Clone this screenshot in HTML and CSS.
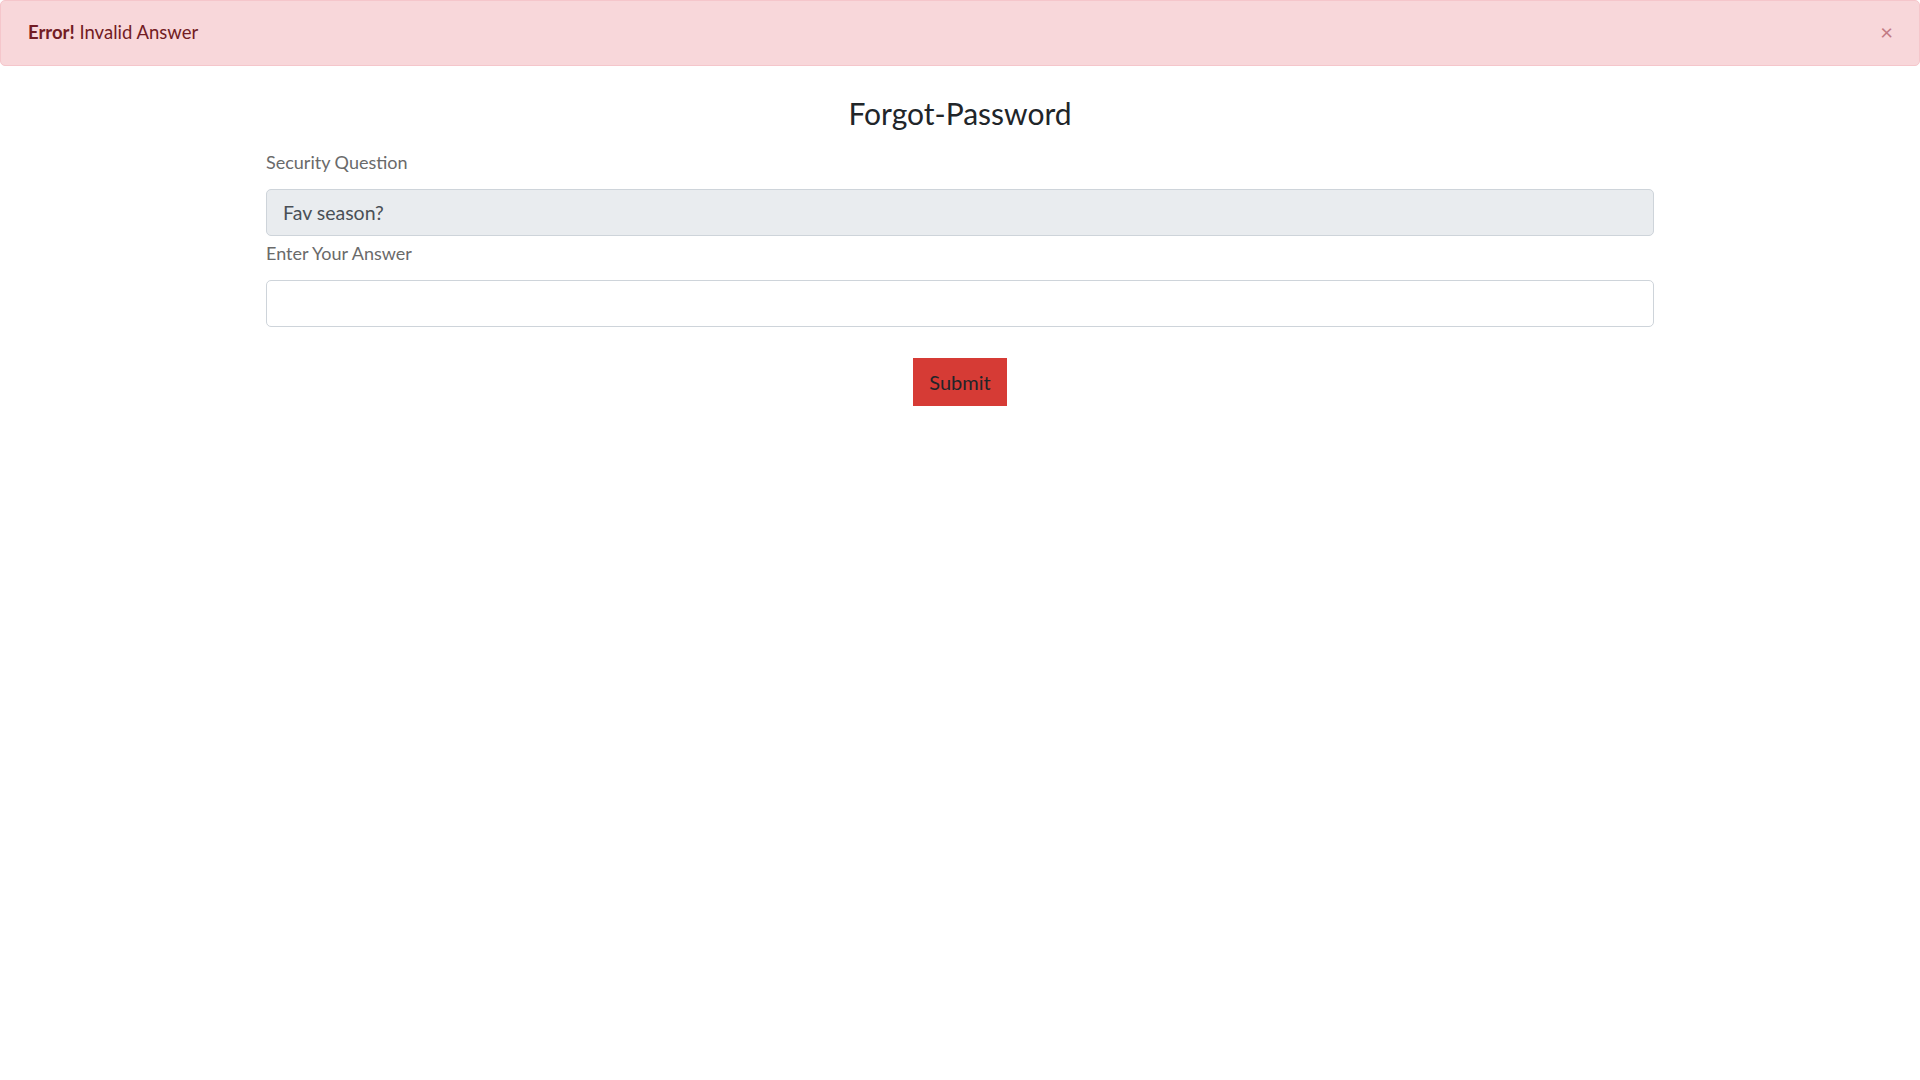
FILE: index.html
```html
<!DOCTYPE html>
<html lang="en">
<head>
<meta charset="utf-8">
<title>Forgot-Password</title>
<link rel="stylesheet" href="styles.css">
</head>
<body>
<div class="alert">
  <span class="alert-text"><strong>Error!</strong> Invalid Answer</span>
  <button class="alert-close" type="button" aria-label="Close">&times;</button>
</div>
<main class="container">
  <h2 class="title">Forgot-Password</h2>
  <form class="form">
    <label class="label">Security Question</label>
    <input class="input input-disabled" type="text" value="Fav season?" disabled>
    <label class="label">Enter Your Answer</label>
    <input class="input" type="text">
    <div class="actions">
      <button class="btn-submit" type="button">Submit</button>
    </div>
  </form>
</main>
</body>
</html>
```
FILE: styles.css
```css
* { box-sizing: border-box; }
html, body { margin: 0; padding: 0; background: #fff; }
body {
  font-family: Lato, "Open Sans", sans-serif;
  color: #212529;
}
.alert {
  display: flex;
  align-items: center;
  justify-content: space-between;
  height: 66px;
  padding: 0 26px 2px 27px;
  background: #f8d7da;
  border: 1px solid #f5c6cb;
  border-radius: 5px;
  color: #721c24;
  font-size: 18.5px;
}
.alert strong { font-weight: 700; }
.alert-close {
  background: none;
  border: 0;
  padding: 0;
  font-family: Lato, sans-serif;
  font-size: 22px;
  line-height: 1;
  color: #b5636e;
  opacity: 0.8;
  cursor: pointer;
}
.container {
  width: 1388px;
  margin: 0 auto;
}
.title {
  margin: 29px 0 0;
  text-align: center;
  font-weight: 400;
  font-size: 30px;
  line-height: 36px;
  color: #212529;
}
.form {
  display: flex;
  flex-direction: column;
  margin-top: 14px;
}
.label {
  font-size: 18px;
  line-height: 24px;
  color: #6a6a6a;
  margin: 5px 0 15px;
}
.input {
  height: 47px;
  border: 1px solid #ced4da;
  border-radius: 5px;
  padding: 0 16px;
  font-family: Lato, sans-serif;
  font-size: 19.5px;
  color: #495057;
  background: #fff;
}
.input-disabled { background: #e9ecef; }
.actions {
  display: flex;
  justify-content: center;
  margin-top: 31px;
}
.btn-submit {
  width: 94px;
  height: 48px;
  background: #d63b35;
  border: 0;
  border-radius: 0;
  font-family: Lato, sans-serif;
  font-size: 20px;
  color: #212529;
  cursor: pointer;
}
```
